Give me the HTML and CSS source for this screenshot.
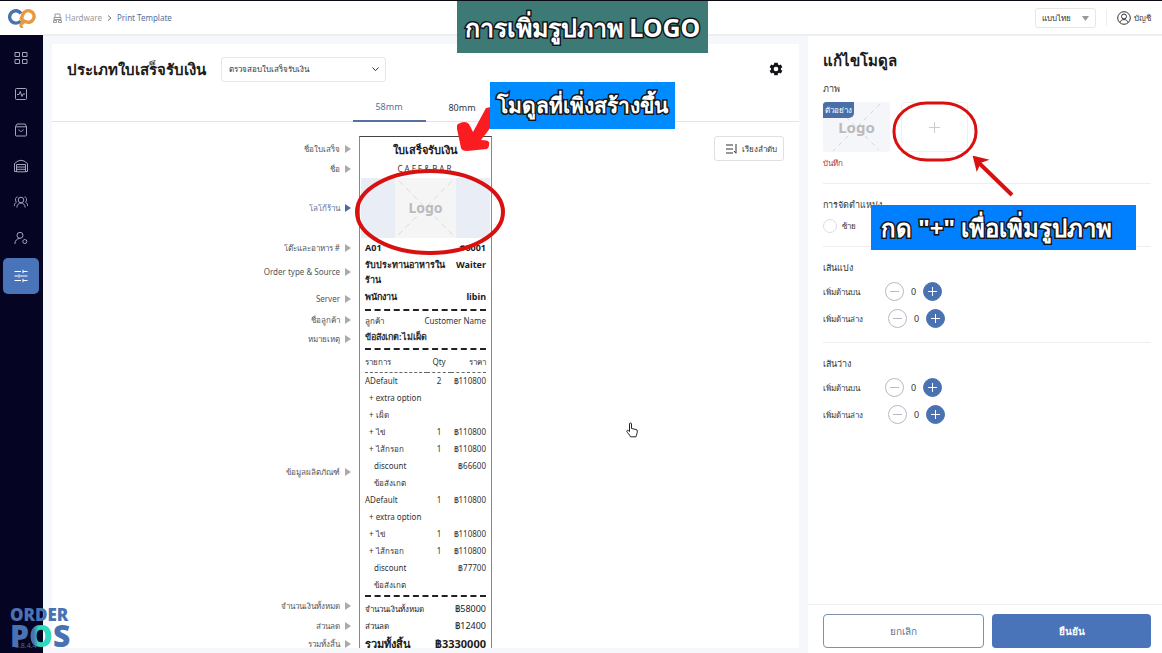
FILE: index.html
```html
<!doctype html>
<html lang="th">
  <head>
    <meta charset="utf-8">
    <title>Print Template</title>
    <link rel="stylesheet" href="styles.css">
  </head>

  <body>
    <aside class="sidebar">
      <a class="logo" href="#" aria-label="Order POS">
        <svg width="28" height="20" viewBox="0 0 28 20" fill="none" stroke-width="3.4">
          <path d="M13 5.500A6.200 6.200 0 1 0 12.500 13" stroke="#4a72ae"/>
          <path d="M14.500 18C13 19 12.500 17.500 14 15.500L15.500 13M12.500 12C14 10 14.200 8.500 14.800 6.500A5.800 5.800 0 1 1 18 13.800C15.500 14 14 12 13 9.500" stroke="#e8983e"/>
        </svg>
      </a>
      <nav class="menu">
        <a class="menu-item" href="#" aria-label="Dashboard"><svg viewBox="0 0 14 14"><path d="M1 1.500h4.500v4H1zM8.500 1.500H13v4H8.500zM1 8.500h4.500v4H1zM8.500 8.500H13v4H8.500z"/></svg></a>
        <a class="menu-item" href="#" aria-label="Activity"><svg viewBox="0 0 14 14"><rect x="1.500" y="1.500" width="11" height="11" rx="1"/><path d="M3 7.500h2L6.200 4.500 8 9.500 9 7h2"/></svg></a>
        <a class="menu-item" href="#" aria-label="Orders"><svg viewBox="0 0 14 14"><path d="M3 1h8l1.500 2.500V12a1 1 0 0 1-1 1h-9a1 1 0 0 1-1-1V3.500zM1.500 3.800h11M4.800 6.500c.5 2.500 4 2.500 4.500 0"/></svg></a>
        <a class="menu-item" href="#" aria-label="Store"><svg viewBox="0 0 14 14"><path d="M2.500 12.500h-2V4.500L4 2l3-.7L10 2l3.500 2.500v8h-2M2.500 12.800V5.500h9v7.300zM3 8h8M3 10.300h8"/></svg></a>
        <a class="menu-item" href="#" aria-label="Customers"><svg viewBox="0 0 14 14"><circle cx="7" cy="5" r="2.800"/><path d="M2.800 12.500c.3-6 8.100-6 8.400 0M3.500 2C1 2 1 6 2.500 7.200 1 8 .5 9 .3 11M10.500 2c2.500 0 2.500 4 1 5.200 1.500.8 2 1.800 2.200 3.800"/></svg></a>
        <a class="menu-item" href="#" aria-label="Staff"><svg viewBox="0 0 14 14"><circle cx="6" cy="4.300" r="3"/><path d="M.8 13c.3-3.500 2-5.300 5-5.600"/><circle cx="10.800" cy="10.500" r="2"/></svg></a>
        <a class="menu-item active" href="#" aria-label="Settings"><svg viewBox="0 0 14 14"><path d="M.5 2.500H7M9 2.500h4.500M9 .8v3.400M.5 7H4M6 7h7.500M5 5.300v3.400M.5 11.500H7M9 11.500h4.500M9 9.800v3.400"/></svg></a>
      </nav>
    </aside>

    <div class="page">
      <header class="topbar">
        <nav class="breadcrumb">
          <a href="#"><svg width="9" height="10" viewBox="0 0 9 10" fill="none" stroke="#999"><path d="M2 4V1h5v3M1 4.500h7v2H1zM.5 9.500v-2h3v2zM5.500 9.500v-2h3v2z"/></svg>Hardware</a>
          <svg width="5" height="6" viewBox="0 0 5 6" fill="none" stroke="#777"><path d="M1 .5 4 3 1 5.500"/></svg>
          <a class="current" href="#">Print Template</a>
        </nav>
        <div class="account">
          <div class="select language">
            <select aria-label="Language"><option>แบบไทย</option></select>
            <svg width="7" height="5" viewBox="0 0 7 5"><path d="M0 0h7L3.500 5z" fill="#999"/></svg>
          </div>
          <a class="user" href="#">
            <svg width="14" height="14" viewBox="0 0 14 14" fill="none" stroke="#333"><circle cx="7" cy="7" r="6.300"/><circle cx="7" cy="5.500" r="2.500"/><path d="M3 11.500c.8-4 7.200-4 8 0"/></svg>
            บัญชี
          </a>
        </div>
      </header>

      <div class="columns">
        <main class="card">
          <div class="card-head">
            <h1>ประเภทใบเสร็จรับเงิน</h1>
            <div class="select template">
              <select aria-label="ประเภทใบเสร็จรับเงิน"><option>ตรวจสอบใบเสร็จรับเงิน</option></select>
              <svg width="7" height="5" viewBox="0 0 7 5" fill="none" stroke="#333"><path d="M.5.5l3 3.200 3-3.200"/></svg>
            </div>
            <button class="gear" aria-label="Settings">
              <svg width="16" height="16" viewBox="0 0 24 24" fill="#15151b"><path d="M19.400 13a7.500 7.500 0 0 0 0-2l2.200-1.700-2.300-4-2.600 1a7.500 7.500 0 0 0-1.700-1L14.600 2.500H9.400L9 5.300a7.500 7.500 0 0 0-1.700 1l-2.600-1-2.300 4L4.600 11a7.500 7.500 0 0 0 0 2l-2.200 1.700 2.300 4 2.600-1a7.500 7.500 0 0 0 1.700 1l.4 2.800h5.200l.4-2.800a7.500 7.500 0 0 0 1.700-1l2.600 1 2.300-4zM12 15.500a3.500 3.500 0 1 1 0-7 3.500 3.500 0 0 1 0 7z"/></svg>
            </button>
          </div>

          <div class="tabs">
            <button class="tab active">58mm</button>
            <button class="tab">80mm</button>
          </div>

          <div class="preview">
            <button class="sort">
              <svg width="12" height="10" viewBox="0 0 12 10" fill="none" stroke="#333"><path d="M0 1h7M0 5h7M0 9h7M10 0v9M8 7l2 2.500"/></svg>
              เรียงลำดับ
            </button>

            <div class="module first">
              <span class="label">ชื่อใบเสร็จ</span>
              <div class="paper name">ใบเสร็จรับเงิน</div>
            </div>
            <div class="module">
              <span class="label">ชื่อ</span>
              <div class="paper shop">CAFE&amp;BAR</div>
            </div>
            <div class="module">
              <span class="label active">โลโก้ร้าน</span>
              <div class="paper image">
                <div class="placeholder">
                  <svg viewBox="0 0 61 60" fill="none" stroke="#ddd" stroke-dasharray="6 4"><path d="M4 3l54 54M57 3 3 57"/></svg>
                  <span>Logo</span>
                </div>
                <svg class="mark-oval" width="152" height="88" viewBox="0 0 152 88" fill="none" stroke="#d8100f" stroke-width="4"><ellipse cx="76" cy="44" rx="73" ry="41"/></svg>
                <svg class="mark-brush" width="34" height="46" viewBox="0 0 34 46" fill="#fb1c22"><path d="M34 0L29 1 16 25 12 17Q8 13 1 17Q-1 19 0 22L4 41Q5 44 10 44L30 42Q33 40 32 35Q31 33 24 33L34 20z"/></svg>
                <div class="note note-module">โมดูลที่เพิ่งสร้างขึ้น</div>
              </div>
            </div>
            <div class="module">
              <span class="label">โต๊ะและอาหาร #</span>
              <div class="paper strong line"><span>A01</span><span>#0001</span></div>
            </div>
            <div class="module">
              <span class="label">Order type &amp; Source</span>
              <div class="paper strong line"><span>รับประทานอาหารในร้าน</span><span>Waiter</span></div>
            </div>
            <div class="module">
              <span class="label">Server</span>
              <div class="paper strong line staff"><span>พนักงาน</span><span>libin</span></div>
            </div>
            <div class="module">
              <span class="label">ชื่อลูกค้า</span>
              <div class="paper"><div class="line ruled"><span>ลูกค้า</span><span>Customer Name</span></div></div>
            </div>
            <div class="module">
              <span class="label">หมายเหตุ</span>
              <div class="paper remark">ข้อสังเกต:ไม่เผ็ด</div>
            </div>
            <div class="module">
              <span class="label">ข้อมูลผลิตภัณฑ์</span>
              <div class="paper products">
                <table class="items">
                  <thead>
                    <tr><th>รายการ</th><th>Qty</th><th>ราคา</th></tr>
                  </thead>
                  <tbody>
                    <tr><td>ADefault</td><td>2</td><td>฿110800</td></tr>
                    <tr class="extra"><td colspan="3">+ extra option</td></tr>
                    <tr class="extra"><td>+ เผ็ด</td><td></td><td></td></tr>
                    <tr class="extra"><td>+ ไข่</td><td>1</td><td>฿110800</td></tr>
                    <tr class="extra"><td>+ ไส้กรอก</td><td>1</td><td>฿110800</td></tr>
                    <tr class="sub"><td>discount</td><td></td><td>฿66600</td></tr>
                    <tr class="sub"><td>ข้อสังเกต</td><td></td><td></td></tr>
                    <tr><td>ADefault</td><td>1</td><td>฿110800</td></tr>
                    <tr class="extra"><td colspan="3">+ extra option</td></tr>
                    <tr class="extra"><td>+ ไข่</td><td>1</td><td>฿110800</td></tr>
                    <tr class="extra"><td>+ ไส้กรอก</td><td>1</td><td>฿110800</td></tr>
                    <tr class="sub"><td>discount</td><td></td><td>฿77700</td></tr>
                    <tr class="sub"><td>ข้อสังเกต</td><td></td><td></td></tr>
                  </tbody>
                </table>
              </div>
            </div>
            <div class="module">
              <span class="label">จำนวนเงินทั้งหมด</span>
              <div class="paper"><div class="line ruled sum"><span>จำนวนเงินทั้งหมด</span><span>฿58000</span></div></div>
            </div>
            <div class="module">
              <span class="label">ส่วนลด</span>
              <div class="paper line sum"><span>ส่วนลด</span><span>฿12400</span></div>
            </div>
            <div class="module">
              <span class="label">รวมทั้งสิ้น</span>
              <div class="paper line total"><span>รวมทั้งสิ้น</span><span>฿3330000</span></div>
            </div>
          </div>
        </main>

        <section class="editor">
          <div class="fields">
            <h2>แก้ไขโมดูล</h2>
            <div class="field pictures">
              <h3>ภาพ</h3>
              <div class="tiles">
                <div class="tile sample">
                  <svg viewBox="0 0 67 50" fill="none" stroke="#d5d8dc" stroke-dasharray="5 4"><path d="M10 2l46 46M57 2 10 49"/></svg>
                  <span>Logo</span>
                  <em>ตัวอย่าง</em>
                </div>
                <div class="upload">
                  <button class="tile add" aria-label="เพิ่มรูปภาพ">
                    <svg width="11" height="11" viewBox="0 0 11 11" stroke="#ccc"><path d="M5.500 0v11M0 5.500h11"/></svg>
                  </button>
                  <svg class="mark-ring" width="124" height="100" viewBox="0 0 124 100" fill="none" stroke="#d8100f" stroke-width="3"><rect x="3" y="3" width="82" height="57" rx="33" ry="28"/><path d="M87 62l34 33" stroke-width="4"/><path d="M83 57l12 3-6 2-3 7z" fill="#d8100f" stroke-width="2"/></svg>
                  <div class="note note-add">กด "+" เพื่อเพิ่มรูปภาพ</div>
                </div>
              </div>
              <p class="save">บันทึก</p>
            </div>
            <div class="field align">
              <h3>การจัดตำแหน่ง</h3>
              <label class="choice"><input type="radio" name="align"> ซ้าย</label>
            </div>
            <div class="field">
              <h3>เส้นแบ่ง</h3>
              <div class="stepper"><span>เพิ่มด้านบน</span><button class="minus" aria-label="ลด"></button><output>0</output><button class="plus" aria-label="เพิ่ม"></button></div>
              <div class="stepper"><span>เพิ่มด้านล่าง</span><button class="minus" aria-label="ลด"></button><output>0</output><button class="plus" aria-label="เพิ่ม"></button></div>
            </div>
            <div class="field">
              <h3>เส้นว่าง</h3>
              <div class="stepper"><span>เพิ่มด้านบน</span><button class="minus" aria-label="ลด"></button><output>0</output><button class="plus" aria-label="เพิ่ม"></button></div>
              <div class="stepper"><span>เพิ่มด้านล่าง</span><button class="minus" aria-label="ลด"></button><output>0</output><button class="plus" aria-label="เพิ่ม"></button></div>
            </div>
          </div>
          <footer class="actions">
            <button class="cancel">ยกเลิก</button>
            <button class="confirm">ยืนยัน</button>
          </footer>
        </section>
      </div>
    </div>

    <!-- video overlays -->
    <div class="note note-title">การเพิ่มรูปภาพ LOGO</div>
    <div class="brand"><small>3.8.4.4</small><span>ORDER</span><strong>P<i>O</i>S</strong></div>
    <svg class="pointer" width="12" height="16" viewBox="0 0 12 16" fill="#fff" stroke="#222"><path d="M3.500 9.500V2a1 1 0 0 1 2 0v4.500l4.500 1a1.500 1.500 0 0 1 1.300 1.500c0 2.500-.8 3.500-1.300 5.800H4.500C3.500 12.500 1.500 11 .8 9.500.5 8.300 2 7.800 3.500 9.500z"/></svg>
  </body>
</html>
```

FILE: styles.css
```css
* { box-sizing: border-box; }

body {
  display: flex;
  height: 100vh;
  margin: 0;
  overflow: hidden;
  position: relative;
  border-top: 1px solid #0a0a14;
  background: #f5f7fa;
  color: #333;
  font-family: "Noto Sans", "Open Sans", sans-serif;
  font-size: 8px;
  line-height: 16px;
}

h1, h2, h3, p { margin: 0; }
a { color: inherit; text-decoration: none; }
button, select, input { font: inherit; color: inherit; margin: 0; }
button { padding: 0; border: 0; background: none; }
svg { flex: none; }

/* sidebar */
.sidebar {
  flex: none;
  width: 43px;
  background: #050423;
}
.logo {
  display: flex;
  align-items: center;
  justify-content: center;
  height: 34px;
  background: #fff;
}
.menu { padding: 5px 4px 0 3px; }
.menu-item {
  display: flex;
  align-items: center;
  justify-content: center;
  height: 36px;
  border-radius: 5px;
}
.menu-item svg {
  width: 14px;
  height: 14px;
  fill: none;
  stroke: #a5a5bd;
}
.menu-item.active {
  margin-top: 2px;
  background: #4a74b9;
}
.menu-item.active svg { stroke: #fff; }

/* top bar */
.page {
  display: flex;
  flex: 1;
  flex-direction: column;
  min-width: 0;
}
.topbar {
  display: flex;
  flex: none;
  align-items: center;
  justify-content: space-between;
  height: 35px;
  padding: 0 11px 0 10px;
  border-bottom: 2px solid #eceef0;
  background: #fff;
}
.breadcrumb, .breadcrumb a, .account, .user { display: flex; align-items: center; }
.breadcrumb { gap: 5px; color: #999; }
.breadcrumb a { gap: 3px; }
.breadcrumb .current { color: #54719c; }
.account { gap: 10px; }
.user { gap: 3px; padding-left: 10px; border-left: 1px solid #eee; }

.select { position: relative; }
.select select {
  width: 100%;
  height: 100%;
  appearance: none;
  border: 1px solid #e6e6e6;
  border-radius: 3px;
  background: #fff;
}
.select svg {
  position: absolute;
  top: 50%;
  right: 7px;
  margin-top: -2px;
}
.language { width: 61px; height: 20px; }
.language select { padding: 0 6px; }
.template { width: 165px; height: 25px; }
.template select { padding: 0 7px; }

/* template card */
.columns {
  display: flex;
  flex: 1;
  gap: 9px;
  min-height: 0;
  padding-left: 9px;
}
.card {
  display: flex;
  flex: 1;
  flex-direction: column;
  min-width: 0;
  margin: 8px 0 5px;
  background: #fff;
}
.card-head {
  display: flex;
  flex: none;
  align-items: center;
  gap: 15px;
  height: 50px;
  padding: 0 15px;
}
h1 { color: #1b1b1b; font-size: 15px; line-height: 24px; }
.gear { height: 16px; margin-left: auto; }
.tabs {
  display: flex;
  flex: none;
  justify-content: center;
  height: 28px;
  border-bottom: 1px solid #e4e4e4;
}
.tab { width: 73px; height: 28px; font-size: 9px; }
.tab.active { border-bottom: 2px solid #56709f; color: #54719c; }

/* the callout reaches above the preview, so only the bottom is clipped */
.preview {
  position: relative;
  flex: 1;
  min-height: 0;
  padding-top: 14px;
  clip-path: inset(-100px 0 0 0);
}
.sort {
  display: flex;
  position: absolute;
  top: 14px;
  right: 15px;
  align-items: center;
  gap: 4px;
  height: 25px;
  padding: 0 6px 0 11px;
  border: 1px solid #e0e0e0;
  border-radius: 3px;
}

/* receipt: the label sits beside its part of the paper */
.module {
  display: grid;
  grid-template-columns: 1fr 133px 1fr;
}
.label {
  display: flex;
  align-items: center;
  justify-content: flex-end;
  padding-right: 8px;
  color: #555;
}
.label::after {
  content: "";
  margin-left: 5px;
  border: solid transparent;
  border-width: 4px 0 4px 6px;
  border-left-color: #aaa;
}
.label.active { color: #54719c; }
.label.active::after { border-left-color: #4a6aa5; }
.paper {
  min-width: 0;
  padding: 0 5px;
  border: solid #888;
  border-width: 0 1px;
}
.module.first .paper { border-top-width: 1px; border-top-color: #444; }
.name {
  height: 25px;
  color: #1b1b1b;
  font-size: 11px;
  font-weight: bold;
  line-height: 26px;
  text-align: center;
}
.shop { letter-spacing: 2px; text-align: center; }
.line { display: flex; justify-content: space-between; gap: 4px; }
.line span:last-child { flex: none; }
.strong {
  padding-top: 1px;
  padding-bottom: 1px;
  color: #1b1b1b;
  font-size: 9px;
  font-weight: bold;
  line-height: 15px;
}
.staff { height: 21px; }
.ruled { height: 21px; padding-top: 2px; border-top: 2px dashed #222; }
.remark { height: 18px; font-size: 9px; font-weight: bold; line-height: 14px; }
.sum { color: #222; line-height: 17px; }
.sum.ruled { height: 22px; padding-top: 3px; }
.sum span:last-child { font-size: 9px; }
.total {
  color: #1b1b1b;
  font-size: 11px;
  font-weight: bold;
  line-height: 20px;
}

.image { position: relative; height: 62px; padding: 1px; }
.placeholder {
  display: flex;
  position: relative;
  justify-content: center;
  height: 60px;
  background: #e9edf5;
}
.placeholder svg { width: 61px; height: 60px; background: #f5f5f5; }
.placeholder span {
  position: absolute;
  top: 20px;
  color: #bbb;
  font-size: 14px;
  font-weight: bold;
  line-height: 20px;
}

.products { padding-bottom: 2px; }
.products::before {
  content: "";
  display: block;
  border-top: 2px dashed #222;
}
.items {
  width: 100%;
  border-collapse: collapse;
  table-layout: fixed;
}
.items th, .items td {
  height: 17px;
  padding: 0;
  font-weight: normal;
  text-align: left;
  white-space: nowrap;
}
.items th { height: 22px; padding-top: 2px; border-bottom: 1px dashed #666; }
.items th:nth-child(1) { width: 62px; }
.items th:nth-child(2) { width: 24px; }
.items th:nth-child(2), .items td:nth-child(2) { text-align: center; }
.items th:nth-child(3), .items td:nth-child(3) { text-align: right; }
.items .extra td:first-child { padding-left: 4px; }
.items .sub td:first-child { padding-left: 9px; }

/* module editor */
.editor {
  display: flex;
  flex: none;
  flex-direction: column;
  width: 354px;
  background: #fff;
}
.fields { flex: 1; min-height: 0; padding: 12px 11px 0 15px; }
h2 { color: #1b1b1b; font-size: 15px; line-height: 24px; }
h3 { font-size: 9px; font-weight: normal; }
.field { padding: 13px 0 10px; border-bottom: 1px solid #eee; }
.field:last-child { border: 0; }
.pictures { padding: 9px 0 12px; }
.align { padding-bottom: 12px; }
.tiles { display: flex; gap: 11px; padding-top: 5px; }
.tile {
  display: flex;
  position: relative;
  align-items: center;
  justify-content: center;
  width: 67px;
  height: 50px;
  border-radius: 3px;
}
.sample { overflow: hidden; background: #f4f6f9; }
.sample svg { width: 67px; height: 50px; }
.sample span {
  position: absolute;
  color: #bbb;
  font-size: 15px;
  font-weight: bold;
}
.sample em {
  position: absolute;
  top: 0;
  left: 0;
  padding: 0 2px;
  border-radius: 2px 0 5px 0;
  background: #4a6fa8;
  color: #fff;
  font-style: normal;
}
.upload { position: relative; }
.add { border: 1px solid #f0f0f0; }
.save { padding-top: 3px; color: #b83232; }
.choice { display: flex; align-items: center; gap: 5px; padding-top: 5px; }
.choice input {
  width: 14px;
  height: 14px;
  appearance: none;
  border: 1px solid #ddd;
  border-radius: 50%;
}
.stepper { display: flex; align-items: center; height: 27px; }
.stepper span { margin-right: 25px; }
.stepper output { width: 19px; font-size: 9px; text-align: center; }
.field h3 + .stepper { margin-top: 2px; }
.minus, .plus {
  width: 19px;
  height: 19px;
  border: 1px solid #b4bac6;
  border-radius: 50%;
  background: linear-gradient(#b4bac6, #b4bac6) center / 9px 1px no-repeat;
}
.plus {
  border-color: #4a72b2;
  background:
    linear-gradient(#fff, #fff) center / 9px 1px no-repeat,
    linear-gradient(#fff, #fff) center / 1px 9px no-repeat,
    #4a72b2;
}
.actions {
  display: flex;
  gap: 8px;
  padding: 9px 11px 5px 15px;
  border-top: 1px solid #f0f0f0;
}
.actions button { flex: 1; height: 34px; border-radius: 4px; font-size: 10px; }
.cancel { border: 1px solid #8090a8; color: #5f7590; }
.actions .confirm { background: #4a74b9; color: #fff; font-weight: bold; }

/* overlays */
.note {
  position: absolute;
  z-index: 2;
  color: #fff;
  font-weight: bold;
  white-space: nowrap;
  -webkit-text-stroke: 3px #10151c;
  paint-order: stroke fill;
}
.note-title {
  top: 0;
  left: 457px;
  width: 251px;
  height: 52px;
  background: #3d7a76;
  font-size: 25px;
  line-height: 52px;
  text-align: center;
}
.note-module {
  top: -95px;
  left: 130px;
  width: 185px;
  height: 47px;
  background: #008cff;
  font-size: 21px;
  line-height: 47px;
  text-align: center;
}
.note-add {
  top: 103px;
  left: -30px;
  width: 265px;
  height: 45px;
  padding-left: 10px;
  background: #007fff;
  font-size: 24px;
  line-height: 45px;
}
.mark-oval { position: absolute; top: -9px; left: -6px; }
.mark-brush { position: absolute; top: -70px; left: 97px; }
.mark-ring { position: absolute; top: -2px; left: -10px; }
.brand {
  position: absolute;
  bottom: 3px;
  left: 10px;
  color: #4a72b2;
  font-family: "Open Sans", sans-serif;
  font-weight: 800;
}
.brand span, .brand strong { display: block; position: relative; }
.brand span { font-size: 17px; line-height: 14px; }
.brand strong { font-size: 30px; font-weight: 800; line-height: 28px; }
.brand i {
  background: linear-gradient(90deg, #4a72b2 20%, #2ed9be 40%);
  background-clip: text;
  color: transparent;
  font-style: normal;
}
.brand small {
  position: absolute;
  bottom: 0;
  left: 5px;
  color: #666a88;
  font-size: 7px;
  font-weight: normal;
  line-height: 8px;
}
.pointer { position: absolute; top: 421px; left: 626px; }
```
